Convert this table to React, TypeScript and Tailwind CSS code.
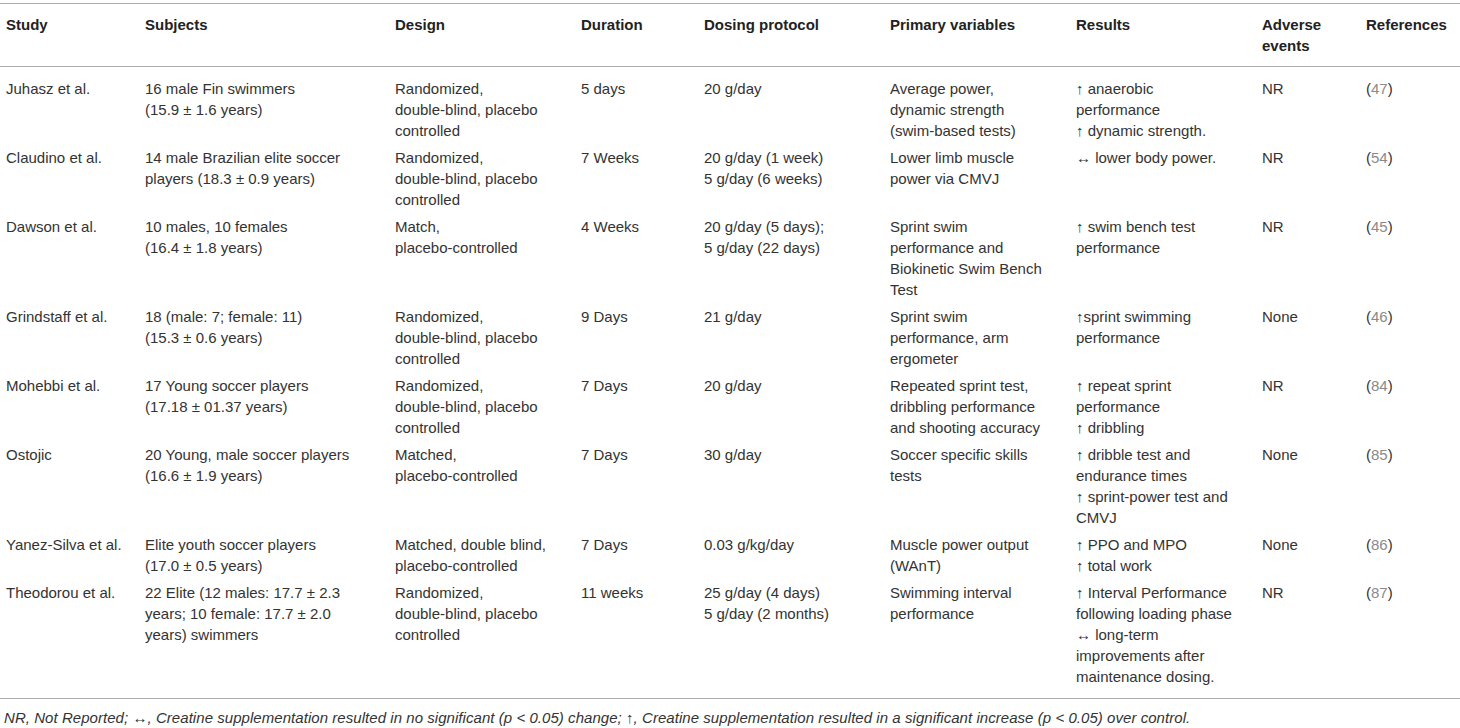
import React from "react";

type Row = {
  study: string;
  subjects: string[];
  design: string[];
  duration: string;
  dosing: string[];
  primary: string[];
  results: string[];
  adverse: string;
  ref: string;
};

const rows: Row[] = [
  {
    study: "Juhasz et al.",
    subjects: ["16 male Fin swimmers", "(15.9 ± 1.6 years)"],
    design: ["Randomized,", "double-blind, placebo", "controlled"],
    duration: "5 days",
    dosing: ["20 g/day"],
    primary: ["Average power,", "dynamic strength", "(swim-based tests)"],
    results: ["↑ anaerobic", "performance", "↑ dynamic strength."],
    adverse: "NR",
    ref: "47",
  },
  {
    study: "Claudino et al.",
    subjects: ["14 male Brazilian elite soccer", "players (18.3 ± 0.9 years)"],
    design: ["Randomized,", "double-blind, placebo", "controlled"],
    duration: "7 Weeks",
    dosing: ["20 g/day (1 week)", "5 g/day (6 weeks)"],
    primary: ["Lower limb muscle", "power via CMVJ"],
    results: ["↔ lower body power."],
    adverse: "NR",
    ref: "54",
  },
  {
    study: "Dawson et al.",
    subjects: ["10 males, 10 females", "(16.4 ± 1.8 years)"],
    design: ["Match,", "placebo-controlled"],
    duration: "4 Weeks",
    dosing: ["20 g/day (5 days);", "5 g/day (22 days)"],
    primary: ["Sprint swim", "performance and", "Biokinetic Swim Bench", "Test"],
    results: ["↑ swim bench test", "performance"],
    adverse: "NR",
    ref: "45",
  },
  {
    study: "Grindstaff et al.",
    subjects: ["18 (male: 7; female: 11)", "(15.3 ± 0.6 years)"],
    design: ["Randomized,", "double-blind, placebo", "controlled"],
    duration: "9 Days",
    dosing: ["21 g/day"],
    primary: ["Sprint swim", "performance, arm", "ergometer"],
    results: ["↑sprint swimming", "performance"],
    adverse: "None",
    ref: "46",
  },
  {
    study: "Mohebbi et al.",
    subjects: ["17 Young soccer players", "(17.18 ± 01.37 years)"],
    design: ["Randomized,", "double-blind, placebo", "controlled"],
    duration: "7 Days",
    dosing: ["20 g/day"],
    primary: ["Repeated sprint test,", "dribbling performance", "and shooting accuracy"],
    results: ["↑ repeat sprint", "performance", "↑ dribbling"],
    adverse: "NR",
    ref: "84",
  },
  {
    study: "Ostojic",
    subjects: ["20 Young, male soccer players", "(16.6 ± 1.9 years)"],
    design: ["Matched,", "placebo-controlled"],
    duration: "7 Days",
    dosing: ["30 g/day"],
    primary: ["Soccer specific skills", "tests"],
    results: ["↑ dribble test and", "endurance times", "↑ sprint-power test and", "CMVJ"],
    adverse: "None",
    ref: "85",
  },
  {
    study: "Yanez-Silva et al.",
    subjects: ["Elite youth soccer players", "(17.0 ± 0.5 years)"],
    design: ["Matched, double blind,", "placebo-controlled"],
    duration: "7 Days",
    dosing: ["0.03 g/kg/day"],
    primary: ["Muscle power output", "(WAnT)"],
    results: ["↑ PPO and MPO", "↑ total work"],
    adverse: "None",
    ref: "86",
  },
  {
    study: "Theodorou et al.",
    subjects: ["22 Elite (12 males: 17.7 ± 2.3", "years; 10 female: 17.7 ± 2.0", "years) swimmers"],
    design: ["Randomized,", "double-blind, placebo", "controlled"],
    duration: "11 weeks",
    dosing: ["25 g/day (4 days)", "5 g/day (2 months)"],
    primary: ["Swimming interval", "performance"],
    results: [
      "↑ Interval Performance",
      "following loading phase",
      "↔ long-term",
      "improvements after",
      "maintenance dosing.",
    ],
    adverse: "NR",
    ref: "87",
  },
];

const widths = [139, 250, 186, 123, 186, 186, 186, 104, 100];

function Lines({ lines }: { lines: string[] }) {
  return (
    <>
      {lines.map((l, i) => (
        <div key={i} className="whitespace-nowrap">
          {l}
        </div>
      ))}
    </>
  );
}

export default function App() {
  const headers: string[][] = [
    ["Study"],
    ["Subjects"],
    ["Design"],
    ["Duration"],
    ["Dosing protocol"],
    ["Primary variables"],
    ["Results"],
    ["Adverse", "events"],
    ["References"],
  ];
  return (
    <div
      className="w-[1460px] h-[728px] bg-white overflow-hidden pt-[3px] text-[#333333]"
      style={{ fontFamily: '"Liberation Sans", Arial, sans-serif' }}
    >
      <table className="w-[1460px] table-fixed border-collapse text-[15px] leading-[21px]">
        <colgroup>
          {widths.map((w, i) => (
            <col key={i} style={{ width: w }} />
          ))}
        </colgroup>
        <thead>
          <tr className="border-t border-b border-[#adadad]">
            {headers.map((h, i) => (
              <th
                key={i}
                className="text-left align-top font-bold text-[#222222] pl-[6px] pr-[4px] pt-[10px] pb-[10px]"
              >
                <Lines lines={h} />
              </th>
            ))}
          </tr>
        </thead>
        <tbody>
          {rows.map((r, idx) => {
            const first = idx === 0;
            const last = idx === rows.length - 1;
            const pad =
              "pl-[6px] pr-[4px] align-top " +
              (first ? "pt-[11px] " : "pt-[3px] ") +
              (last ? "pb-[11px]" : "pb-[3px]");
            return (
              <tr key={idx} className={last ? "border-b border-[#adadad]" : ""}>
                <td className={pad}>
                  <Lines lines={[r.study]} />
                </td>
                <td className={pad}>
                  <Lines lines={r.subjects} />
                </td>
                <td className={pad}>
                  <Lines lines={r.design} />
                </td>
                <td className={pad}>
                  <Lines lines={[r.duration]} />
                </td>
                <td className={pad}>
                  <Lines lines={r.dosing} />
                </td>
                <td className={pad}>
                  <Lines lines={r.primary} />
                </td>
                <td className={pad}>
                  <Lines lines={r.results} />
                </td>
                <td className={pad}>
                  <Lines lines={[r.adverse]} />
                </td>
                <td className={pad}>
                  <div className="whitespace-nowrap">
                    (<span className="text-[#8a8a8a]">{r.ref}</span>)
                  </div>
                </td>
              </tr>
            );
          })}
        </tbody>
      </table>
      <div className="pl-[4px] pt-[9px] text-[15px] leading-[19px] italic tracking-[0.05px] text-[#333333] whitespace-nowrap">
        NR, Not Reported; ↔, Creatine supplementation resulted in no significant (p &lt; 0.05) change; ↑,
        Creatine supplementation resulted in a significant increase (p &lt; 0.05) over control.
      </div>
    </div>
  );
}
